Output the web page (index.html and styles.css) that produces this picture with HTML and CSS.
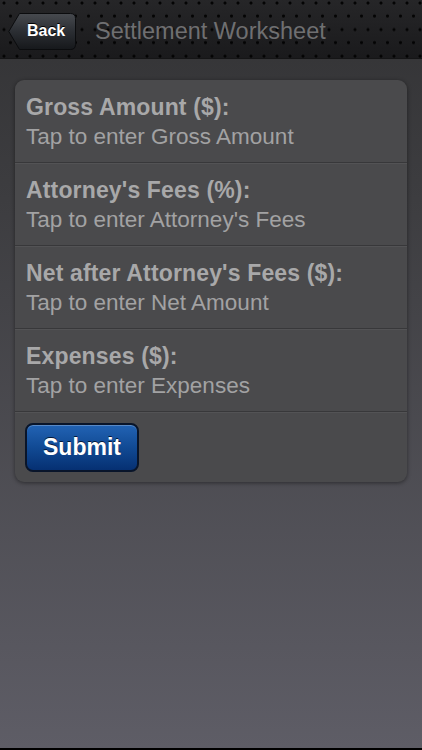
FILE: index.html
```html
<!DOCTYPE html>
<html lang="en">
<head>
    <meta charset="UTF-8">
    <meta name="viewport" content="width=device-width, initial-scale=1.0">
    <link rel="stylesheet" href="styles.css">
    <title>Settlement Worksheet</title>
</head>
<body>
    <div id="topbar">
        <button class="back-btn">
            <svg class="back-shape" width="68" height="37" viewBox="0 0 68 37">
                <defs>
                    <linearGradient id="backfill" x1="0" y1="0" x2="0" y2="1">
                        <stop offset="0" stop-color="#474a4f"/>
                        <stop offset="0.5" stop-color="#2b2e33"/>
                        <stop offset="1" stop-color="#16181b"/>
                    </linearGradient>
                </defs>
                <path d="M11.5 0.5 H62.5 Q67.5 0.5 67.5 5.5 V31.5 Q67.5 36.5 62.5 36.5 H11.5 L0.8 18.5 Z" fill="url(#backfill)" stroke="#0b0c0e" stroke-width="1"/>
            </svg>
            <span>Back</span>
        </button>
        <h1>Settlement Worksheet</h1>
    </div>

    <div id="worksheet">
        <div class="field">
            <div class="field-label">Gross Amount ($):</div>
            <div class="field-hint">Tap to enter Gross Amount</div>
        </div>
        <div class="field">
            <div class="field-label">Attorney's Fees (%):</div>
            <div class="field-hint">Tap to enter Attorney's Fees</div>
        </div>
        <div class="field">
            <div class="field-label">Net after Attorney's Fees ($):</div>
            <div class="field-hint">Tap to enter Net Amount</div>
        </div>
        <div class="field">
            <div class="field-label">Expenses ($):</div>
            <div class="field-hint">Tap to enter Expenses</div>
        </div>
        <div class="actions">
            <button id="submit-btn">Submit</button>
        </div>
    </div>
</body>
</html>
```
FILE: styles.css
```css
html {
    height: 100%;
}
body {
    margin: 0;
    min-height: 100%;
    font-family: "Liberation Sans", Arial, sans-serif;
    background: linear-gradient(#333335 0, #3d3d40 200px, #5e5d66 748px, #000 748px);
    -webkit-user-select: none;
    user-select: none;
}
#topbar {
    height: 59px;
    box-sizing: border-box;
    display: flex;
    align-items: center;
    padding-left: 8px;
    gap: 19px;
    background-color: #1e1e20;
    background-image:
        radial-gradient(circle at 4px 3px, #030303 1.1px, transparent 1.9px),
        radial-gradient(circle at 10.5px 16px, #030303 1.1px, transparent 1.9px),
        linear-gradient(#262628, #1a1a1c);
    background-size: 13px 26.6px, 13px 26.6px, 100% 100%;
    border-bottom: 1px solid #151516;
}
.back-btn {
    position: relative;
    width: 68px;
    height: 37px;
    margin-top: 4px;
    padding: 0 0 0 19px;
    border: none;
    background: none;
    text-align: left;
    color: #fff;
    font-family: inherit;
    font-size: 16px;
    font-weight: bold;
    cursor: pointer;
}
.back-shape {
    position: absolute;
    left: 0;
    top: 0;
}
.back-btn span {
    position: relative;
    text-shadow: 0 -1px 0 #000;
}
#topbar h1 {
    margin: 4px 0 0 0;
    font-size: 23.5px;
    font-weight: normal;
    color: #6f6f71;
}
#worksheet {
    margin: 21px 15px 0 15px;
    background-color: #4a4a4c;
    border-radius: 9px;
    box-shadow: 0 1px 4px rgba(0, 0, 0, 0.45);
    overflow: hidden;
}
.field {
    height: 83px;
    box-sizing: border-box;
    padding: 12px 11px 0 11px;
    border-bottom: 1px solid #38383a;
    box-shadow: inset 0 1px 0 #535355;
    line-height: 30px;
}
.field:first-child {
    box-shadow: none;
}
.field-label {
    font-size: 23px;
    font-weight: bold;
    letter-spacing: 0.15px;
    color: #a8a8a9;
}
.field-hint {
    font-size: 22.5px;
    color: #a2a2a3;
}
.actions {
    padding: 11px 10px 10px 10px;
    box-shadow: inset 0 1px 0 #535355;
}
#submit-btn {
    display: block;
    width: 114px;
    height: 49px;
    border: 2px solid #09152a;
    border-radius: 8px;
    background: linear-gradient(#2263b4, #114a94 50%, #063072);
    box-shadow: inset 0 1px 0 rgba(255, 255, 255, 0.25);
    color: #fff;
    font-family: inherit;
    font-size: 23px;
    font-weight: bold;
    text-shadow: 0 -1px 0 #02183a;
    cursor: pointer;
}
```
